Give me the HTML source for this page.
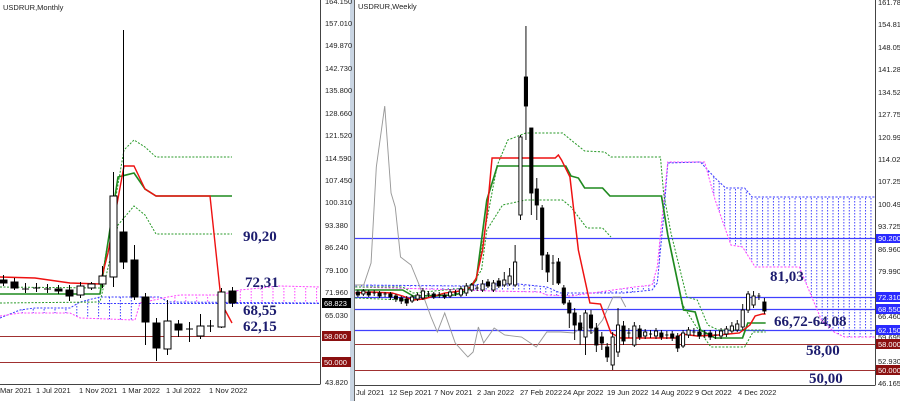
<!DOCTYPE html>
<html><head><meta charset="utf-8"><style>
html,body{margin:0;padding:0;background:#fff;width:900px;height:401px;overflow:hidden}
svg{display:block}
text{font-family:"Liberation Sans",sans-serif}
.ax{font-size:7.5px;fill:#222}
.big{font-family:"Liberation Serif",serif;font-size:15px;font-weight:bold;fill:#1c1c6e}
.bw{fill:#fff;font-size:7.5px}
</style></head><body>
<svg width="900" height="401" viewBox="0 0 900 401" xmlns="http://www.w3.org/2000/svg">
<defs>
<pattern id="hb" width="5.15" height="3" patternUnits="userSpaceOnUse"><rect x="0" y="0" width="0.9" height="1.5" fill="#3b3bff"/></pattern>
<pattern id="lb" width="10.9" height="3" patternUnits="userSpaceOnUse"><rect x="0" y="0" width="1" height="1.5" fill="#3b3bff"/></pattern>
<pattern id="lm" width="10.9" height="3" patternUnits="userSpaceOnUse"><rect x="0" y="0" width="1" height="1.5" fill="#ff44ff"/></pattern>
</defs>
<rect width="900" height="401" fill="#fff"/>
<rect x="350" y="0" width="5" height="401" fill="#c9d5e3"/>
<line x1="354.5" y1="0" x2="354.5" y2="401" stroke="#666" stroke-width="1"/>

<!-- LEFT CHART -->
<line x1="320.5" y1="0" x2="320.5" y2="384" stroke="#444"/>
<line x1="0" y1="384.5" x2="320.5" y2="384.5" stroke="#444"/>
<text x="3" y="10" class="ax">USDRUR,Monthly</text>
<polygon points="0,318 20,310 35,308 70,308 80,302 100,297 140,297 140,303 135,320 80,318 70,313 20,313 0,316" fill="url(#lb)"/>
<polygon points="140,297 160,297 168,302 320,303 320,287 280,286 240,290 220,295 180,295 168,297 140,303" fill="url(#lm)"/>
<polyline points="0,318 20,310 35,308 70,308 80,302 100,297 160,297 168,302 320,303" fill="none" stroke="#3b3bff" stroke-dasharray="2,1.5"/>
<polyline points="0,316 20,313 70,313 80,318 135,320 140,303 168,297 180,295 220,295 240,290 280,286 320,287" fill="none" stroke="#ff44ff" stroke-dasharray="2,1.5"/>
<line x1="100" y1="303.5" x2="320" y2="303.5" stroke="#3b3bff" stroke-dasharray="2,1.5"/>
<line x1="0" y1="336.5" x2="320" y2="336.5" stroke="#a03030"/>
<line x1="0" y1="362.5" x2="320" y2="362.5" stroke="#a03030"/>
<polyline points="0,287 100,288 124,150 134,140 145,147 156,157 232,157" fill="none" stroke="#2a9a2a" stroke-dasharray="2,1.5"/>
<polyline points="0,303 100,302 118,225 134,206 145,215 156,234 232,234" fill="none" stroke="#2a9a2a" stroke-dasharray="2,1.5"/>
<polyline points="0,294 100,294 118,177 134,173 145,189 156,196 232,196" fill="none" stroke="#1f8a1f" stroke-width="1.6"/>
<polyline points="0,277 35,278 70,283 100,284 108,253 124,166 134,166 145,189 156,196 210,196 220,290 225,310 232,323" fill="none" stroke="#ee1111" stroke-width="1.4"/>
<g stroke="#000" stroke-width="1">
<line x1="3.5" y1="275" x2="3.5" y2="286"/><rect x="0" y="280" width="7" height="3" fill="#000"/>
<line x1="14.5" y1="278" x2="14.5" y2="290"/><rect x="11" y="282" width="7" height="6" fill="#000"/>
<line x1="25.5" y1="283" x2="25.5" y2="293"/><line x1="22" y1="289" x2="29" y2="289"/>
<line x1="36.5" y1="283" x2="36.5" y2="292"/><line x1="33" y1="288" x2="40" y2="288"/>
<line x1="47.5" y1="284" x2="47.5" y2="293"/><line x1="44" y1="289" x2="51" y2="289"/>
<line x1="58.5" y1="285" x2="58.5" y2="294"/><rect x="55" y="289" width="7" height="2" fill="#000"/>
<line x1="69.5" y1="285" x2="69.5" y2="301"/><rect x="66" y="290" width="7" height="6" fill="#000"/>
<line x1="80.5" y1="282" x2="80.5" y2="298"/><rect x="77" y="286" width="7" height="9" fill="#fff"/>
<line x1="91.5" y1="282" x2="91.5" y2="290"/><rect x="88" y="284" width="7" height="4" fill="#fff"/>
<line x1="102.5" y1="266" x2="102.5" y2="288"/><rect x="99" y="276" width="7" height="8" fill="#fff"/>
<line x1="113.5" y1="172" x2="113.5" y2="287"/><rect x="110" y="196" width="7" height="81" fill="#fff"/>
<line x1="123.5" y1="30" x2="123.5" y2="269"/><rect x="120" y="232" width="7" height="30" fill="#000"/>
<line x1="134.5" y1="245" x2="134.5" y2="300"/><rect x="131" y="260" width="7" height="37" fill="#000"/>
<line x1="145.5" y1="293" x2="145.5" y2="345"/><rect x="142" y="297" width="7" height="25" fill="#000"/>
<line x1="156.5" y1="318" x2="156.5" y2="361"/><rect x="153" y="323" width="7" height="25" fill="#000"/>
<line x1="167.5" y1="300" x2="167.5" y2="355"/><rect x="164" y="321" width="7" height="28" fill="#fff"/>
<line x1="178.5" y1="320" x2="178.5" y2="337"/><rect x="175" y="324" width="7" height="6" fill="#000"/>
<line x1="189.5" y1="322" x2="189.5" y2="342"/><line x1="186" y1="329" x2="193" y2="329"/>
<line x1="200.5" y1="314" x2="200.5" y2="339"/><rect x="197" y="326" width="7" height="10" fill="#fff"/>
<line x1="210.5" y1="320" x2="210.5" y2="332"/><line x1="207" y1="326" x2="214" y2="326"/>
<line x1="221.5" y1="288" x2="221.5" y2="328"/><rect x="218" y="292" width="7" height="35" fill="#fff"/>
<line x1="232.5" y1="287" x2="232.5" y2="307"/><rect x="229" y="291" width="7" height="12" fill="#000"/>
</g>
<text x="243" y="241" class="big">90,20</text>
<text x="245" y="287" class="big">72,31</text>
<text x="243" y="315" class="big">68,55</text>
<text x="243" y="331" class="big">62,15</text>
<g class="ax">
<text x="325" y="4">164.150</text>
<text x="325" y="26">157.010</text>
<text x="325" y="48">149.870</text>
<text x="325" y="71">142.730</text>
<text x="325" y="93">135.800</text>
<text x="325" y="116">128.660</text>
<text x="325" y="138">121.520</text>
<text x="325" y="161">114.590</text>
<text x="325" y="183">107.450</text>
<text x="325" y="205">100.310</text>
<text x="325" y="228">93.380</text>
<text x="325" y="250">86.240</text>
<text x="325" y="273">79.100</text>
<text x="325" y="295">71.960</text>
<text x="325" y="318">65.030</text>
<text x="325" y="385">43.820</text>
</g>
<rect x="322" y="298" width="29" height="10" fill="#000"/><text x="324" y="306" class="bw">68.823</text>
<rect x="322" y="331" width="29" height="10" fill="#8b1010"/><text x="324" y="339" class="bw">58.000</text>
<rect x="322" y="357" width="29" height="10" fill="#8b1010"/><text x="324" y="365" class="bw">50.000</text>
<g class="ax">
<text x="0" y="393">Mar 2021</text>
<text x="36" y="393">1 Jul 2021</text>
<text x="79" y="393">1 Nov 2021</text>
<text x="122" y="393">1 Mar 2022</text>
<text x="166" y="393">1 Jul 2022</text>
<text x="209" y="393">1 Nov 2022</text>
</g>

<!-- RIGHT CHART -->
<line x1="875.5" y1="0" x2="875.5" y2="385" stroke="#444"/>
<line x1="355" y1="385.5" x2="875.5" y2="385.5" stroke="#444"/>
<text x="358" y="9" class="ax">USDRUR,Weekly</text>
<line x1="355" y1="238.5" x2="875" y2="238.5" stroke="#4040ff" stroke-width="1.2"/>
<line x1="355" y1="297.5" x2="875" y2="297.5" stroke="#4040ff" stroke-width="1.2"/>
<line x1="355" y1="309.5" x2="875" y2="309.5" stroke="#4040ff" stroke-width="1.2"/>
<line x1="355" y1="330.5" x2="875" y2="330.5" stroke="#4040ff" stroke-width="1.2"/>
<line x1="355" y1="344.5" x2="875" y2="344.5" stroke="#a03030"/>
<line x1="355" y1="370.5" x2="875" y2="370.5" stroke="#a03030"/>
<g transform="matrix(1.0523 0 0 1 -18.3 0)">
<polygon points="355,285 460,286 475,284 510,284 537,287 550,293 610,293 637,290 642,283 648,217 652,163 683,162 697,178 707,188 725,188 732,197 849,197 849,337 820,337 810,332 798,320 790,300 777,267 735,267 723,247 712,245 697,200 687,162 652,162 647,213 642,267 637,285 620,287 560,296 537,295 530,292 485,291 460,290 355,287" fill="url(#hb)"/>
<polyline points="355,285 460,286 475,284 510,284 537,287 550,293 610,293 637,290 642,283 648,217 652,163 683,162 697,178 707,188 725,188 732,197 849,197" fill="none" stroke="#3b3bff" stroke-dasharray="2,1.5"/>
<polyline points="355,287 460,290 485,291 530,292 537,295 560,296 620,287 637,285 642,267 647,213 652,162 687,162 697,200 712,245 723,247 735,267 777,267 790,300 798,320 810,332 820,337 849,337" fill="none" stroke="#ff44ff" stroke-dasharray="2,1.5"/>
<polyline points="355,285 363,285 370,263 375,167 383,106 389,193 393,207 398,257 408,265 415,283 420,297 427,317 433,332 440,313 450,343 462,357 467,352 472,327 477,343 487,328 497,335 513,337 527,347 537,332 550,332 563,333 570,327 580,333 590,320 600,297 607,297 612,307" fill="none" stroke="#999" stroke-width="0.9"/>
<polyline points="355,287 400,287 410,293 460,288 470,280 480,220 490,165 500,140 517,133 552,133 560,140 573,151 592,152 598,157 645,157 648,193 655,233 670,297 680,300 690,325 700,330 745,330" fill="none" stroke="#2a9a2a" stroke-dasharray="2,1.5"/>
<polyline points="355,298 400,300 460,293 475,270 480,230 495,205 517,200 552,200 560,207 575,228 590,228 598,237" fill="none" stroke="#2a9a2a" stroke-dasharray="2,1.5"/>
<polyline points="665,303 678,325 693,347 725,347 733,332 745,332" fill="none" stroke="#2a9a2a" stroke-dasharray="2,1.5"/>
<polyline points="355,290 400,290 410,296 450,295 462,290 470,280 480,200 490,166 555,166 560,176 567,178 573,188 590,188 597,196 646,196 652,235 667,310 678,312 683,330 697,338 723,338 728,323 745,323" fill="none" stroke="#1f8a1f" stroke-width="1.6"/>
<polyline points="355,293 370,292 390,293 400,296 410,300 420,299 440,293 455,291 465,287 470,278 476,250 480,215 485,158 508,158 545,158 548,155 551,160 559,177 567,250 578,303 588,304 598,333 607,338 660,338 665,334 680,336 700,335 720,333 730,325 735,316 742,314 745,314" fill="none" stroke="#ee1111" stroke-width="1.4"/>
<g stroke="#000" stroke-width="0.9">
<line x1="357.5" y1="290" x2="357.5" y2="297"/><rect x="356" y="292" width="3" height="3" fill="#000"/>
<line x1="362.7" y1="289" x2="362.7" y2="296"/><rect x="361.2" y="291" width="3" height="3" fill="#fff"/>
<line x1="367.8" y1="290" x2="367.8" y2="297"/><rect x="366.3" y="292" width="3" height="3" fill="#000"/>
<line x1="373" y1="290" x2="373" y2="296"/><line x1="371.5" y1="293" x2="374.5" y2="293"/>
<line x1="378.1" y1="291" x2="378.1" y2="298"/><rect x="376.6" y="293" width="3" height="3" fill="#000"/>
<line x1="383.3" y1="292" x2="383.3" y2="297"/><line x1="381.8" y1="294" x2="384.8" y2="294"/>
<line x1="388.4" y1="292" x2="388.4" y2="300"/><rect x="386.9" y="294" width="3" height="3" fill="#000"/>
<line x1="393.6" y1="294" x2="393.6" y2="302"/><rect x="392.1" y="296" width="3" height="3" fill="#000"/>
<line x1="398.7" y1="296" x2="398.7" y2="304"/><rect x="397.2" y="298" width="3" height="3" fill="#000"/>
<line x1="403.9" y1="296" x2="403.9" y2="306"/><rect x="402.4" y="299" width="3" height="4" fill="#000"/>
<line x1="409" y1="295" x2="409" y2="303"/><rect x="407.5" y="297" width="3" height="4" fill="#fff"/>
<line x1="414.2" y1="293" x2="414.2" y2="301"/><rect x="412.7" y="295" width="3" height="4" fill="#fff"/>
<line x1="419.3" y1="288" x2="419.3" y2="300"/><rect x="417.8" y="291" width="3" height="7" fill="#fff"/>
<line x1="424.5" y1="291" x2="424.5" y2="297"/><line x1="423" y1="294" x2="426" y2="294"/>
<line x1="429.6" y1="292" x2="429.6" y2="299"/><rect x="428.1" y="294" width="3" height="3" fill="#000"/>
<line x1="434.8" y1="292" x2="434.8" y2="298"/><line x1="433.3" y1="295" x2="436.3" y2="295"/>
<line x1="439.9" y1="293" x2="439.9" y2="299"/><rect x="438.4" y="295" width="3" height="2" fill="#000"/>
<line x1="445.1" y1="290" x2="445.1" y2="298"/><rect x="443.6" y="292" width="3" height="4" fill="#fff"/>
<line x1="450.2" y1="290" x2="450.2" y2="296"/><line x1="448.7" y1="293" x2="451.7" y2="293"/>
<line x1="455.4" y1="286" x2="455.4" y2="297"/><rect x="453.9" y="289" width="3" height="6" fill="#fff"/>
<line x1="460.5" y1="283" x2="460.5" y2="296"/><rect x="459" y="286" width="3" height="7" fill="#fff"/>
<line x1="465.7" y1="283" x2="465.7" y2="292"/><rect x="464.2" y="285" width="3" height="5" fill="#fff"/>
<line x1="470.8" y1="285" x2="470.8" y2="291"/><line x1="469.3" y1="288" x2="472.3" y2="288"/>
<line x1="476" y1="280" x2="476" y2="292"/><rect x="474.5" y="284" width="3" height="6" fill="#fff"/>
<line x1="481.1" y1="279" x2="481.1" y2="288"/><rect x="479.6" y="282" width="3" height="4" fill="#000"/>
<line x1="486.3" y1="280" x2="486.3" y2="292"/><rect x="484.8" y="283" width="3" height="7" fill="#fff"/>
<line x1="491.4" y1="278" x2="491.4" y2="288"/><rect x="489.9" y="281" width="3" height="5" fill="#000"/>
<line x1="496.6" y1="272" x2="496.6" y2="287"/><rect x="495.1" y="280" width="3" height="5" fill="#fff"/>
<line x1="501.7" y1="268" x2="501.7" y2="286"/><rect x="500.2" y="276" width="3" height="8" fill="#fff"/>
<line x1="506.9" y1="245" x2="506.9" y2="287"/><rect x="505.4" y="262" width="3" height="23" fill="#fff"/>
<line x1="512" y1="135" x2="512" y2="220"/><rect x="510.5" y="137" width="3" height="78" fill="#fff"/>
<line x1="517.2" y1="26" x2="517.2" y2="140"/><rect x="515.7" y="77" width="3" height="29" fill="#000"/>
<line x1="522.3" y1="128" x2="522.3" y2="215"/><rect x="520.8" y="128" width="3" height="65" fill="#000"/>
<line x1="527.5" y1="178" x2="527.5" y2="220"/><rect x="526" y="189" width="3" height="16" fill="#000"/>
<line x1="532.6" y1="205" x2="532.6" y2="270"/><rect x="531.1" y="208" width="3" height="47" fill="#000"/>
<line x1="537.8" y1="252" x2="537.8" y2="282"/><rect x="536.3" y="255" width="3" height="17" fill="#000"/>
<line x1="542.9" y1="255" x2="542.9" y2="285"/><line x1="541.4" y1="263" x2="544.4" y2="263"/>
<line x1="548.1" y1="258" x2="548.1" y2="285"/><rect x="546.6" y="262" width="3" height="21" fill="#000"/>
<line x1="553.2" y1="285" x2="553.2" y2="305"/><rect x="551.7" y="288" width="3" height="15" fill="#000"/>
<line x1="558.4" y1="300" x2="558.4" y2="328"/><rect x="556.9" y="303" width="3" height="10" fill="#000"/>
<line x1="563.5" y1="308" x2="563.5" y2="340"/><rect x="562" y="313" width="3" height="12" fill="#000"/>
<line x1="568.7" y1="315" x2="568.7" y2="345"/><rect x="567.2" y="323" width="3" height="7" fill="#000"/>
<line x1="573.8" y1="310" x2="573.8" y2="355"/><rect x="572.3" y="313" width="3" height="24" fill="#fff"/>
<line x1="579" y1="310" x2="579" y2="334"/><rect x="577.5" y="315" width="3" height="13" fill="#000"/>
<line x1="584.1" y1="323" x2="584.1" y2="352"/><rect x="582.6" y="328" width="3" height="17" fill="#000"/>
<line x1="589.3" y1="332" x2="589.3" y2="350"/><rect x="587.8" y="337" width="3" height="6" fill="#000"/>
<line x1="594.4" y1="343" x2="594.4" y2="362"/><rect x="592.9" y="347" width="3" height="10" fill="#000"/>
<line x1="599.6" y1="332" x2="599.6" y2="370"/><rect x="598.1" y="337" width="3" height="28" fill="#fff"/>
<line x1="604.7" y1="308" x2="604.7" y2="357"/><rect x="603.2" y="325" width="3" height="27" fill="#fff"/>
<line x1="609.9" y1="321" x2="609.9" y2="345"/><rect x="608.4" y="326" width="3" height="15" fill="#000"/>
<line x1="615" y1="328" x2="615" y2="338"/><line x1="613.5" y1="333" x2="616.5" y2="333"/>
<line x1="620.2" y1="322" x2="620.2" y2="347"/><rect x="618.7" y="326" width="3" height="19" fill="#fff"/>
<line x1="625.3" y1="325" x2="625.3" y2="340"/><rect x="623.8" y="329" width="3" height="8" fill="#000"/>
<line x1="630.5" y1="329" x2="630.5" y2="339"/><rect x="629" y="332" width="3" height="4" fill="#fff"/>
<line x1="635.6" y1="330" x2="635.6" y2="338"/><line x1="634.1" y1="334" x2="637.1" y2="334"/>
<line x1="640.8" y1="328" x2="640.8" y2="339"/><rect x="639.3" y="331" width="3" height="5" fill="#fff"/>
<line x1="645.9" y1="330" x2="645.9" y2="340"/><rect x="644.4" y="333" width="3" height="4" fill="#000"/>
<line x1="651.1" y1="331" x2="651.1" y2="339"/><line x1="649.6" y1="335" x2="652.6" y2="335"/>
<line x1="656.2" y1="331" x2="656.2" y2="341"/><rect x="654.7" y="334" width="3" height="4" fill="#000"/>
<line x1="661.4" y1="333" x2="661.4" y2="352"/><rect x="659.9" y="336" width="3" height="12" fill="#000"/>
<line x1="666.5" y1="330" x2="666.5" y2="348"/><rect x="665" y="333" width="3" height="13" fill="#fff"/>
<line x1="671.7" y1="327" x2="671.7" y2="338"/><rect x="670.2" y="330" width="3" height="5" fill="#fff"/>
<line x1="676.8" y1="328" x2="676.8" y2="336"/><line x1="675.3" y1="332" x2="678.3" y2="332"/>
<line x1="682" y1="329" x2="682" y2="339"/><rect x="680.5" y="332" width="3" height="4" fill="#000"/>
<line x1="687.1" y1="330" x2="687.1" y2="338"/><line x1="685.6" y1="334" x2="688.6" y2="334"/>
<line x1="692.3" y1="330" x2="692.3" y2="340"/><rect x="690.8" y="333" width="3" height="4" fill="#000"/>
<line x1="697.4" y1="331" x2="697.4" y2="339"/><line x1="695.9" y1="335" x2="698.9" y2="335"/>
<line x1="702.6" y1="328" x2="702.6" y2="339"/><rect x="701.1" y="331" width="3" height="5" fill="#fff"/>
<line x1="707.7" y1="326" x2="707.7" y2="337"/><rect x="706.2" y="329" width="3" height="5" fill="#fff"/>
<line x1="712.9" y1="322" x2="712.9" y2="333"/><rect x="711.4" y="326" width="3" height="5" fill="#fff"/>
<line x1="718" y1="320" x2="718" y2="332"/><rect x="716.5" y="324" width="3" height="6" fill="#fff"/>
<line x1="723.2" y1="304" x2="723.2" y2="330"/><rect x="721.7" y="310" width="3" height="17" fill="#fff"/>
<line x1="728.3" y1="291" x2="728.3" y2="313"/><rect x="726.8" y="294" width="3" height="16" fill="#fff"/>
<line x1="733.5" y1="291" x2="733.5" y2="308"/><rect x="732" y="296" width="3" height="9" fill="#fff"/>
<line x1="738.6" y1="293" x2="738.6" y2="300"/><line x1="737.1" y1="296" x2="740.1" y2="296"/>
<line x1="743.8" y1="298" x2="743.8" y2="314"/><rect x="742.3" y="302" width="3" height="9" fill="#000"/>
</g>
</g>
<text x="770" y="281" class="big">81,03</text>
<text x="774" y="326" class="big">66,72-64,08</text>
<text x="806" y="355" class="big">58,00</text>
<text x="809" y="383" class="big">50,00</text>
<g class="ax">
<text x="878" y="5">161.785</text>
<text x="878" y="27">154.815</text>
<text x="878" y="50">148.050</text>
<text x="878" y="72">141.285</text>
<text x="878" y="95">134.520</text>
<text x="878" y="117">127.755</text>
<text x="878" y="140">120.990</text>
<text x="878" y="162">114.025</text>
<text x="878" y="184">107.255</text>
<text x="878" y="207">100.490</text>
<text x="878" y="229">93.725</text>
<text x="878" y="252">86.960</text>
<text x="878" y="274">79.990</text>
<text x="878" y="319">66.460</text>
<text x="878" y="340">59.695</text>
<text x="878" y="364">52.930</text>
<text x="878" y="386">46.165</text>
</g>
<rect x="876" y="234" width="24" height="9" fill="#2a2aff"/><text x="878" y="241" class="bw">90.200</text>
<rect x="876" y="292" width="24" height="10" fill="#2a2aff"/><text x="878" y="300" class="bw">72.310</text>
<rect x="876" y="304" width="24" height="10" fill="#2a2aff"/><text x="878" y="312" class="bw">68.550</text>
<rect x="876" y="325" width="24" height="10" fill="#2a2aff"/><text x="878" y="333" class="bw">62.150</text>
<rect x="876" y="339" width="24" height="10" fill="#8b1010"/><text x="878" y="347" class="bw">58.000</text>
<rect x="876" y="365" width="24" height="10" fill="#8b1010"/><text x="878" y="373" class="bw">50.000</text>
<g class="ax">
<text x="356" y="395">Jul 2021</text>
<text x="389" y="395">12 Sep 2021</text>
<text x="434" y="395">7 Nov 2021</text>
<text x="477" y="395">2 Jan 2022</text>
<text x="520" y="395">27 Feb 2022</text>
<text x="563" y="395">24 Apr 2022</text>
<text x="607" y="395">19 Jun 2022</text>
<text x="651" y="395">14 Aug 2022</text>
<text x="695" y="395">9 Oct 2022</text>
<text x="738" y="395">4 Dec 2022</text>
</g>
</svg>
</body></html>
